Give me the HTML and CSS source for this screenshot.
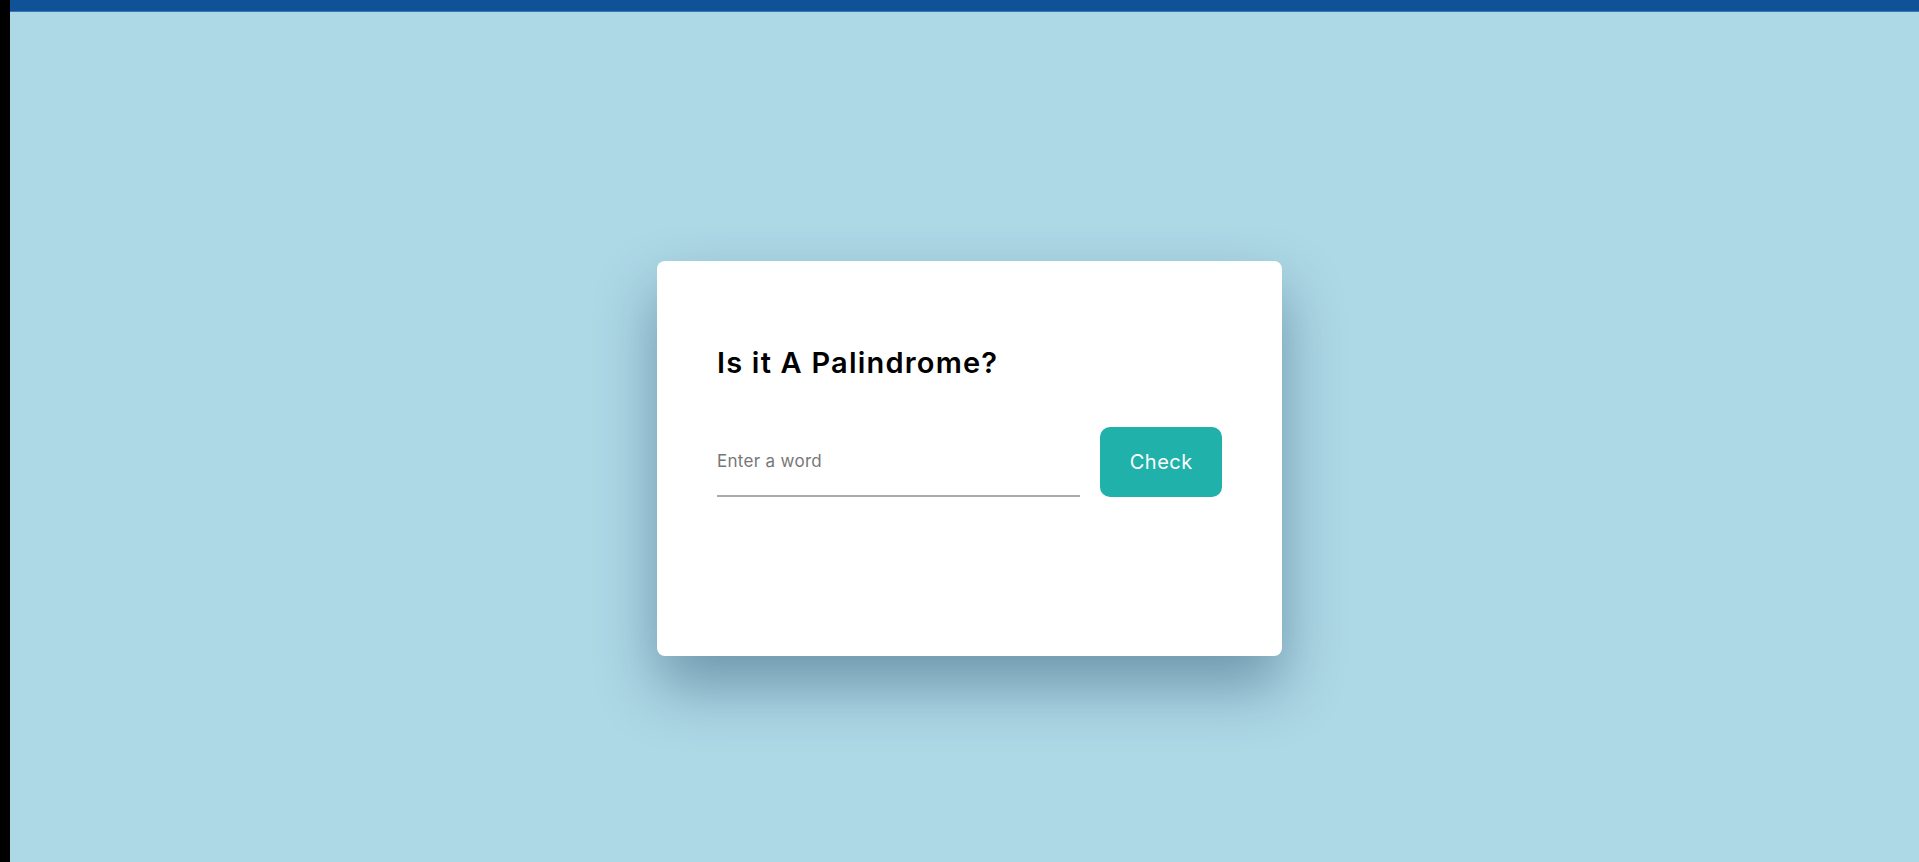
FILE: index.html
```html
<!DOCTYPE html>
<html lang="en">
<head>
<meta charset="utf-8">
<title>Palindrome Checker</title>
<link rel="stylesheet" href="styles.css">
</head>
<body>
  <div class="topbar"></div>
  <main class="stage">
    <section class="card">
      <h1 class="title">Is it A Palindrome?</h1>
      <div class="row">
        <input class="word" type="text" placeholder="Enter a word">
        <button class="check" type="button">Check</button>
      </div>
    </section>
  </main>
</body>
</html>
```
FILE: styles.css
```css
html, body {
  margin: 0;
  height: 100%;
}
body {
  background: #add8e6;
  border-left: 10px solid #000;
  font-family: "Inter", "Noto Sans", sans-serif;
  overflow: hidden;
}
.topbar {
  height: 11px;
  background: #0f5298;
  border-bottom: 1px solid #3b78b3;
}
.stage {
  display: flex;
  justify-content: center;
  padding: 249px 0 0 10px;
}
.card {
  box-sizing: border-box;
  width: 625px;
  height: 395px;
  padding: 60px;
  background: #fff;
  border-radius: 8px;
  box-shadow: 0 30px 60px rgba(25, 60, 90, 0.42);
}
.title {
  margin: 22px 0 0;
  font-size: 29px;
  line-height: 40px;
  font-weight: 600;
  color: #000;
  letter-spacing: 1.2px;
}
.row {
  display: flex;
  align-items: flex-end;
  gap: 20px;
  margin-top: 44px;
}
.word {
  box-sizing: border-box;
  width: 365px;
  height: 70px;
  padding: 0;
  border: none;
  border-bottom: 2px solid #aaa;
  outline: none;
  font-family: inherit;
  font-size: 17px;
  letter-spacing: 0.3px;
  color: #333;
  background: transparent;
}
.word::placeholder {
  color: #777;
}
.check {
  width: 122px;
  height: 70px;
  border: none;
  border-radius: 10px;
  background: #20b2aa;
  color: #fff;
  font-family: inherit;
  font-size: 20px;
  letter-spacing: 0.5px;
  cursor: pointer;
}
```
